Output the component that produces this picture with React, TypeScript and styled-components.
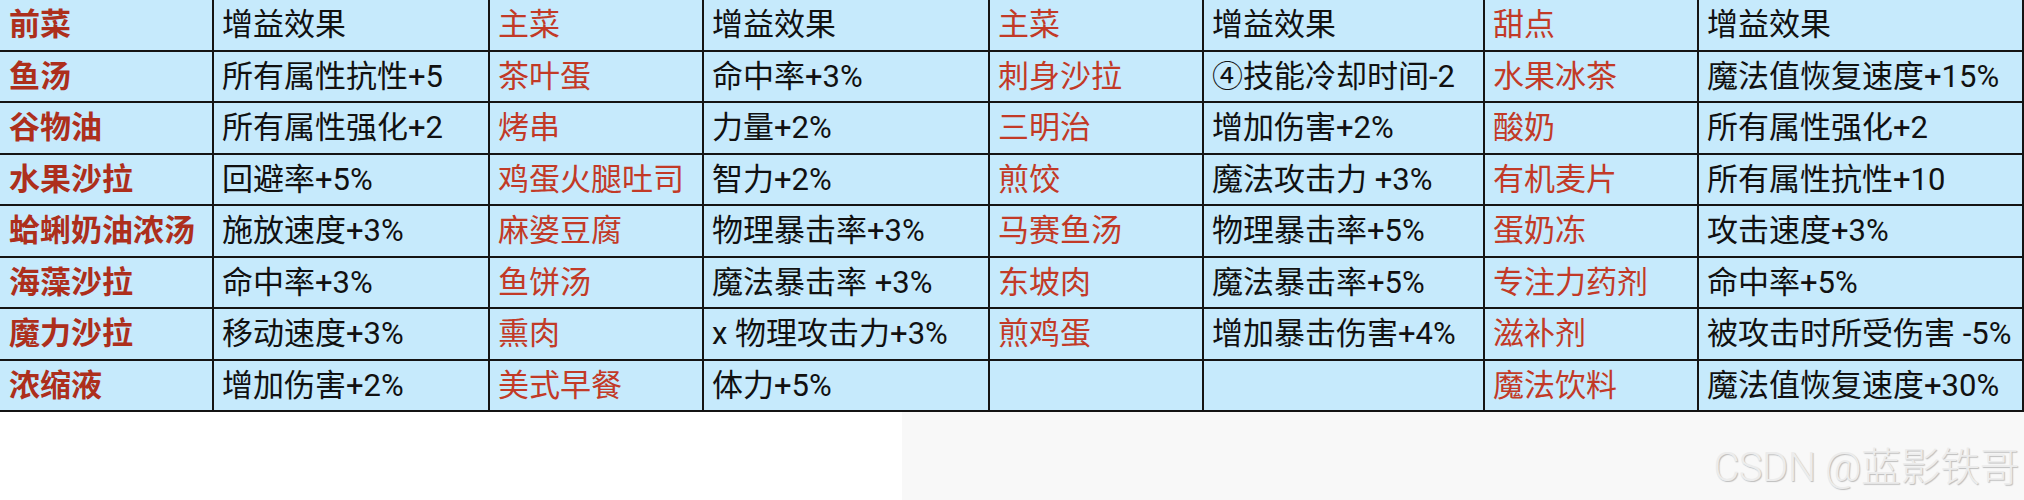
import styled, { createGlobalStyle } from "styled-components";

const GlobalStyle = createGlobalStyle`
  html, body {
    margin: 0;
    padding: 0;
    background: #ffffff;
  }
  body {
    font-family: Roboto, "Noto Sans CJK SC", sans-serif;
  }
`;

type Row = [string, string, string, string, string, string, string, string];

const rows: Row[] = [
  ["前菜", "增益效果", "主菜", "增益效果", "主菜", "增益效果", "甜点", "增益效果"],
  ["鱼汤", "所有属性抗性+5", "茶叶蛋", "命中率+3%", "刺身沙拉", "④技能冷却时间-2", "水果冰茶", "魔法值恢复速度+15%"],
  ["谷物油", "所有属性强化+2", "烤串", "力量+2%", "三明治", "增加伤害+2%", "酸奶", "所有属性强化+2"],
  ["水果沙拉", "回避率+5%", "鸡蛋火腿吐司", "智力+2%", "煎饺", "魔法攻击力 +3%", "有机麦片", "所有属性抗性+10"],
  ["蛤蜊奶油浓汤", "施放速度+3%", "麻婆豆腐", "物理暴击率+3%", "马赛鱼汤", "物理暴击率+5%", "蛋奶冻", "攻击速度+3%"],
  ["海藻沙拉", "命中率+3%", "鱼饼汤", "魔法暴击率 +3%", "东坡肉", "魔法暴击率+5%", "专注力药剂", "命中率+5%"],
  ["魔力沙拉", "移动速度+3%", "熏肉", "x 物理攻击力+3%", "煎鸡蛋", "增加暴击伤害+4%", "滋补剂", "被攻击时所受伤害 -5%"],
  ["浓缩液", "增加伤害+2%", "美式早餐", "体力+5%", "", "", "魔法饮料", "魔法值恢复速度+30%"],
];

const Page = styled.div`
  width: 2024px;
  height: 500px;
  display: flex;
  flex-direction: column;
  overflow: hidden;
`;

const Table = styled.div`
  display: grid;
  grid-template-columns: 214px 276px 214px 286px 214px 281px 214px 325px;
  grid-auto-rows: 51.5px;
  background: #c6eafc;
`;

const Cell = styled.div<{ $kind: "lead" | "dish" | "effect" }>`
  box-sizing: border-box;
  display: flex;
  align-items: center;
  padding-left: ${(p) => (p.$kind === "lead" ? "9px" : "8px")};
  border-right: 2px solid #141414;
  border-bottom: 2px solid #141414;
  font-family: Roboto, "Noto Sans CJK SC", sans-serif;
  font-size: 31px;
  line-height: 1;
  white-space: nowrap;
  overflow: hidden;
  font-weight: ${(p) => (p.$kind === "lead" ? 700 : 400)};
  color: ${(p) =>
    p.$kind === "lead" ? "#ad2f1c" : p.$kind === "dish" ? "#c23a27" : "#111111"};
`;

const Footer = styled.div`
  flex: 1;
  display: flex;
`;

const Blank = styled.div`
  width: 902px;
  background: #ffffff;
`;

const Mark = styled.div`
  flex: 1;
  background: #f8f8f8;
  display: flex;
  align-items: flex-end;
  justify-content: flex-end;
  padding: 0 5px 12px 0;
`;

const MarkText = styled.span`
  font-family: Roboto, "Noto Sans CJK SC", sans-serif;
  font-size: 40px;
  font-weight: 300;
  line-height: 1;
  color: #ececec;
  text-shadow: 1px 1px 1px #bdbdbd;
  letter-spacing: -0.5px;
`;

const kindOf = (col: number) =>
  col === 0 ? "lead" : col % 2 === 0 ? "dish" : "effect";

export default function App() {
  return (
    <>
      <GlobalStyle />
      <Page>
        <Table>
          {rows.map((r, ri) =>
            r.map((text, ci) => (
              <Cell key={`${ri}-${ci}`} $kind={kindOf(ci)}>
                {text}
              </Cell>
            ))
          )}
        </Table>
        <Footer>
          <Blank />
          <Mark>
            <MarkText>CSDN @蓝影铁哥</MarkText>
          </Mark>
        </Footer>
      </Page>
    </>
  );
}
